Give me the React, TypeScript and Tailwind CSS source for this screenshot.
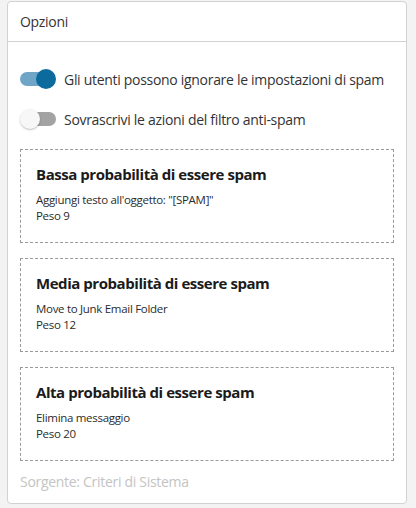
import React from "react";

function Toggle({ on }: { on: boolean }) {
  return on ? (
    <div className="relative w-[36px] h-[20px] flex items-center shrink-0">
      <div className="w-[34px] h-[14px] rounded-full bg-[#6fa6c7]" />
      <div className="absolute right-0 top-0 w-[20px] h-[20px] rounded-full bg-[#0d6a9c]" />
    </div>
  ) : (
    <div className="relative w-[36px] h-[20px] flex items-center justify-end shrink-0">
      <div className="w-[28px] h-[14px] rounded-full bg-[#a3a3a3]" />
      <div className="absolute left-0 top-0 w-[20px] h-[20px] rounded-full bg-[#f7f7f7] shadow-[0_1px_2px_rgba(0,0,0,0.25)]" />
    </div>
  );
}

function Box({ title, action, weight }: { title: string; action: string; weight: string }) {
  return (
    <div className="border border-dashed border-[#9a9a9a] px-[15px] pt-[14px] h-[94px]">
      <div className="text-[15px] font-bold text-[#1b1b1b] leading-[20px] tracking-[-0.45px]">{title}</div>
      <div className="mt-[8px] text-[11.5px] text-[#2b2b2b] leading-[16px] tracking-[-0.3px]">{action}</div>
      <div className="text-[11.5px] text-[#2b2b2b] leading-[16px] tracking-[-0.3px]">{weight}</div>
    </div>
  );
}

export default function App() {
  return (
    <div
      className="w-[416px] h-[508px] bg-[#f3f3f3] pt-[1px] pl-[7px]"
      style={{ fontFamily: '"Open Sans", "Noto Sans", sans-serif' }}
    >
      <div className="w-[400px] h-[503px] bg-white border border-[#d2d2d2] rounded-[4px] flex flex-col">
        <div className="h-[40px] shrink-0 border-b border-[#d2d2d2] px-[12px] flex items-center text-[14px] text-[#333] tracking-[-0.3px]">
          Opzioni
        </div>
        <div className="px-[12px] pt-[27px] flex flex-col gap-[20px]">
          <div className="flex items-center gap-[8px] h-[20px]">
            <Toggle on={true} />
            <span className="text-[14px] text-[#333] tracking-[-0.3px] whitespace-nowrap">Gli utenti possono ignorare le impostazioni di spam</span>
          </div>
          <div className="flex items-center gap-[8px] h-[20px]">
            <Toggle on={false} />
            <span className="text-[14px] text-[#333] tracking-[-0.3px] whitespace-nowrap">Sovrascrivi le azioni del filtro anti-spam</span>
          </div>
        </div>
        <div className="px-[12px] pt-[20px] flex flex-col gap-[15px]">
          <Box title="Bassa probabilità di essere spam" action={'Aggiungi testo all\'oggetto: "[SPAM]"'} weight="Peso 9" />
          <Box title="Media probabilità di essere spam" action="Move to Junk Email Folder" weight="Peso 12" />
          <Box title="Alta probabilità di essere spam" action="Elimina messaggio" weight="Peso 20" />
        </div>
        <div className="px-[12px] pt-[11px] text-[14px] leading-[20px] text-[#c4c4c4] tracking-[-0.3px]">Sorgente: Criteri di Sistema</div>
      </div>
    </div>
  );
}
